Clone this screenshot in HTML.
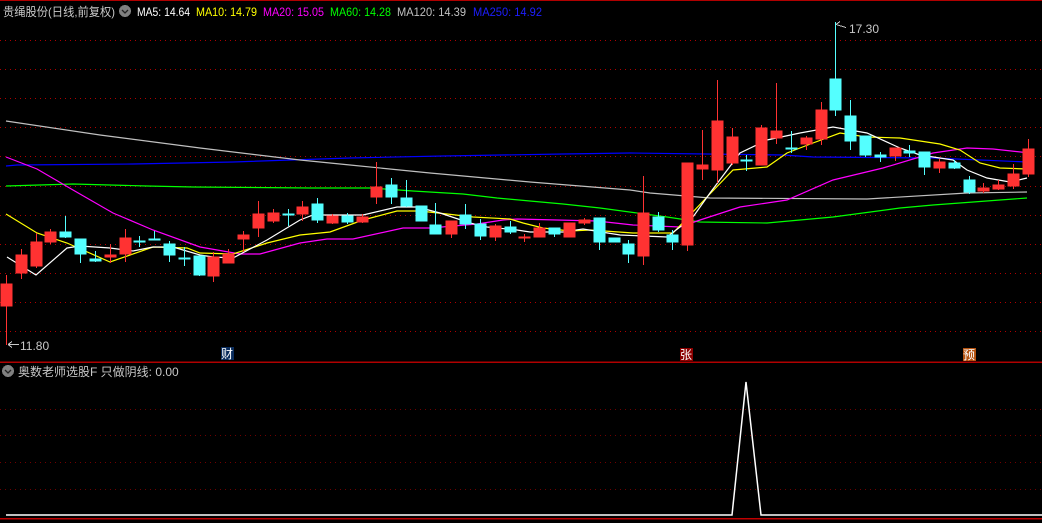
<!DOCTYPE html>
<html><head><meta charset="utf-8"><style>
html,body{margin:0;padding:0;background:#000;width:1042px;height:523px;overflow:hidden}
svg{display:block}
text{font-family:"Liberation Sans","Noto Sans CJK SC",sans-serif;font-size:12px}
</style></head><body>
<svg width="1042" height="523" viewBox="0 0 1042 523" xmlns="http://www.w3.org/2000/svg" shape-rendering="crispEdges">
<rect width="1042" height="523" fill="#000"/>
<line x1="0" y1="0.5" x2="1042" y2="0.5" stroke="#b00000"/>
<g stroke="#b00000" stroke-dasharray="1,4">
<line x1="0" y1="40.5" x2="1042" y2="40.5"/><line x1="0" y1="69.5" x2="1042" y2="69.5"/>
<line x1="0" y1="98.5" x2="1042" y2="98.5"/><line x1="0" y1="127.5" x2="1042" y2="127.5"/>
<line x1="0" y1="156.5" x2="1042" y2="156.5"/><line x1="0" y1="186.5" x2="1042" y2="186.5"/>
<line x1="0" y1="215.5" x2="1042" y2="215.5"/><line x1="0" y1="244.5" x2="1042" y2="244.5"/>
<line x1="0" y1="273.5" x2="1042" y2="273.5"/><line x1="0" y1="302.5" x2="1042" y2="302.5"/>
<line x1="0" y1="331.5" x2="1042" y2="331.5"/>
</g>
<g stroke="#700000" stroke-dasharray="1,4">
<line x1="0" y1="409.5" x2="1042" y2="409.5"/><line x1="0" y1="435.5" x2="1042" y2="435.5"/>
<line x1="0" y1="462.5" x2="1042" y2="462.5"/><line x1="0" y1="489.5" x2="1042" y2="489.5"/>
</g>
<g fill="none" stroke-width="1.2" shape-rendering="auto">
<polyline stroke="#0000ff" points="6,166 17,165 133,164 233,162 350,158 443,156 563,154 630,153 783,155 813,157 933,158 1027,162"/>
<polyline stroke="#c0c0c0" points="6,121 100,135 200,148 300,160 350,165 430,173 530,182 630,190 650,193 710,198 867,199 967,193 1027,192"/>
<polyline stroke="#00ff00" points="6,186 73,184 147,186 193,187 310,188 370,188 413,191 463,194 497,198 530,201 563,204 600,208 667,217 700,222 767,223 833,217 900,208 933,205 1000,200 1027,198"/>
<polyline stroke="#ff00ff" points="6,157 37,169 73,190 113,213 153,230 200,247 240,254 260,254 300,243 327,239 353,239 403,228 430,228 477,224 503,220 517,219 597,221 633,225 680,227 700,220 740,207 787,200 833,180 883,168 933,153 967,148 993,149 1030,153"/>
<polyline stroke="#ffff00" points="6,214 37,233 67,243 110,262 153,247 187,248 200,253 233,254 267,243 300,235 330,232 363,220 397,211 420,211 447,214 473,217 510,219 523,223 543,228 570,231 590,230 633,233 673,233 707,197 733,170 767,167 787,153 813,143 840,133 867,137 900,138 940,144 960,150 980,163 1000,168 1027,169"/>
<polyline stroke="#ffffff" points="7,257 36,275 67,248 80,246 110,248 133,251 153,247 173,247 200,255 213,257 233,258 267,240 300,220 313,215 340,215 363,215 397,207 417,207 440,213 470,223 487,227 517,230 530,232 563,232 583,229 620,235 667,237 693,217 710,193 740,153 767,140 800,133 833,127 867,133 900,148 920,155 953,160 967,170 987,178 1010,182 1027,178"/>
</g>
<g id="c">
<g stroke="#ff3232" fill="#ff3232">
<line x1="6.5" y1="275" x2="6.5" y2="345"/><rect x="1" y="284" width="11" height="22"/>
<line x1="21.5" y1="249" x2="21.5" y2="279"/><rect x="16" y="255" width="11" height="18"/>
<line x1="36.5" y1="233" x2="36.5" y2="268"/><rect x="31" y="242" width="11" height="24"/>
<line x1="50.5" y1="229" x2="50.5" y2="244"/><rect x="45" y="232" width="11" height="10"/>
<line x1="110.5" y1="244" x2="110.5" y2="263"/><rect x="105" y="255" width="11" height="2"/>
<line x1="125.5" y1="229" x2="125.5" y2="262"/><rect x="120" y="238" width="11" height="16"/>
<line x1="213.5" y1="252" x2="213.5" y2="282"/><rect x="208" y="257" width="11" height="19"/>
<line x1="228.5" y1="249" x2="228.5" y2="263"/><rect x="223" y="254" width="11" height="9"/>
<line x1="243.5" y1="231" x2="243.5" y2="252"/><rect x="238" y="235" width="11" height="4"/>
<line x1="258.5" y1="201" x2="258.5" y2="237"/><rect x="253" y="214" width="11" height="14"/>
<line x1="273.5" y1="209" x2="273.5" y2="223"/><rect x="268" y="213" width="11" height="8"/>
<line x1="302.5" y1="201" x2="302.5" y2="221"/><rect x="297" y="207" width="11" height="7"/>
<line x1="332.5" y1="214" x2="332.5" y2="224"/><rect x="327" y="216" width="11" height="7"/>
<line x1="362.5" y1="214" x2="362.5" y2="223"/><rect x="357" y="217" width="11" height="5"/>
<line x1="376.5" y1="162" x2="376.5" y2="204"/><rect x="371" y="187" width="11" height="10"/>
<line x1="451.5" y1="221" x2="451.5" y2="238"/><rect x="446" y="221" width="11" height="13"/>
<line x1="495.5" y1="224" x2="495.5" y2="241"/><rect x="490" y="226" width="11" height="11"/>
<line x1="524.5" y1="234" x2="524.5" y2="242"/><rect x="519" y="237" width="11" height="1"/>
<line x1="539.5" y1="223" x2="539.5" y2="237"/><rect x="534" y="228" width="11" height="9"/>
<line x1="569.5" y1="223" x2="569.5" y2="237"/><rect x="564" y="223" width="11" height="14"/>
<line x1="584.5" y1="218" x2="584.5" y2="225"/><rect x="579" y="220" width="11" height="3"/>
<line x1="643.5" y1="176" x2="643.5" y2="265"/><rect x="638" y="213" width="11" height="43"/>
<line x1="687.5" y1="163" x2="687.5" y2="251"/><rect x="682" y="163" width="11" height="82"/>
<line x1="702.5" y1="130" x2="702.5" y2="180"/><rect x="697" y="165" width="11" height="4"/>
<line x1="717.5" y1="80" x2="717.5" y2="183"/><rect x="712" y="121" width="11" height="49"/>
<line x1="732.5" y1="128" x2="732.5" y2="165"/><rect x="727" y="137" width="11" height="26"/>
<line x1="761.5" y1="125" x2="761.5" y2="165"/><rect x="756" y="128" width="11" height="37"/>
<line x1="776.5" y1="83" x2="776.5" y2="144"/><rect x="771" y="131" width="11" height="7"/>
<line x1="806.5" y1="136" x2="806.5" y2="150"/><rect x="801" y="138" width="11" height="6"/>
<line x1="821.5" y1="102" x2="821.5" y2="145"/><rect x="816" y="110" width="11" height="29"/>
<line x1="895.5" y1="148" x2="895.5" y2="161"/><rect x="890" y="148" width="11" height="8"/>
<line x1="939.5" y1="159" x2="939.5" y2="173"/><rect x="934" y="162" width="11" height="6"/>
<line x1="983.5" y1="183" x2="983.5" y2="193"/><rect x="978" y="188" width="11" height="3"/>
<line x1="998.5" y1="180" x2="998.5" y2="190"/><rect x="993" y="185" width="11" height="4"/>
<line x1="1013.5" y1="164" x2="1013.5" y2="189"/><rect x="1008" y="174" width="11" height="12"/>
<line x1="1028.5" y1="139" x2="1028.5" y2="177"/><rect x="1023" y="149" width="11" height="25"/>
</g>
<g stroke="#54ffff" fill="#54ffff">
<line x1="65.5" y1="216" x2="65.5" y2="238"/><rect x="60" y="232" width="11" height="5"/>
<line x1="80.5" y1="239" x2="80.5" y2="263"/><rect x="75" y="239" width="11" height="15"/>
<line x1="95.5" y1="251" x2="95.5" y2="262"/><rect x="90" y="259" width="11" height="2"/>
<line x1="139.5" y1="236" x2="139.5" y2="247"/><rect x="134" y="241" width="11" height="1"/>
<line x1="154.5" y1="231" x2="154.5" y2="240"/><rect x="149" y="239" width="11" height="1"/>
<line x1="169.5" y1="241" x2="169.5" y2="262"/><rect x="164" y="244" width="11" height="11"/>
<line x1="184.5" y1="247" x2="184.5" y2="266"/><rect x="179" y="258" width="11" height="1"/>
<line x1="199.5" y1="256" x2="199.5" y2="276"/><rect x="194" y="256" width="11" height="19"/>
<line x1="288.5" y1="209" x2="288.5" y2="226"/><rect x="283" y="214" width="11" height="1"/>
<line x1="317.5" y1="198" x2="317.5" y2="223"/><rect x="312" y="204" width="11" height="16"/>
<line x1="347.5" y1="213" x2="347.5" y2="224"/><rect x="342" y="216" width="11" height="6"/>
<line x1="391.5" y1="178" x2="391.5" y2="204"/><rect x="386" y="185" width="11" height="12"/>
<line x1="406.5" y1="180" x2="406.5" y2="207"/><rect x="401" y="198" width="11" height="8"/>
<line x1="421.5" y1="206" x2="421.5" y2="221"/><rect x="416" y="206" width="11" height="15"/>
<line x1="435.5" y1="203" x2="435.5" y2="234"/><rect x="430" y="225" width="11" height="9"/>
<line x1="465.5" y1="204" x2="465.5" y2="229"/><rect x="460" y="215" width="11" height="9"/>
<line x1="480.5" y1="219" x2="480.5" y2="240"/><rect x="475" y="224" width="11" height="12"/>
<line x1="510.5" y1="221" x2="510.5" y2="234"/><rect x="505" y="227" width="11" height="5"/>
<line x1="554.5" y1="228" x2="554.5" y2="237"/><rect x="549" y="228" width="11" height="6"/>
<line x1="599.5" y1="218" x2="599.5" y2="250"/><rect x="594" y="218" width="11" height="24"/>
<line x1="614.5" y1="238" x2="614.5" y2="242"/><rect x="609" y="238" width="11" height="4"/>
<line x1="628.5" y1="240" x2="628.5" y2="263"/><rect x="623" y="244" width="11" height="10"/>
<line x1="658.5" y1="212" x2="658.5" y2="232"/><rect x="653" y="217" width="11" height="13"/>
<line x1="672.5" y1="230" x2="672.5" y2="250"/><rect x="667" y="235" width="11" height="7"/>
<line x1="746.5" y1="155" x2="746.5" y2="171"/><rect x="741" y="160" width="11" height="1"/>
<line x1="791.5" y1="131" x2="791.5" y2="153"/><rect x="786" y="148" width="11" height="1"/>
<line x1="835.5" y1="22" x2="835.5" y2="116"/><rect x="830" y="79" width="11" height="31"/>
<line x1="850.5" y1="100" x2="850.5" y2="150"/><rect x="845" y="116" width="11" height="25"/>
<line x1="865.5" y1="136" x2="865.5" y2="157"/><rect x="860" y="136" width="11" height="19"/>
<line x1="880.5" y1="152" x2="880.5" y2="162"/><rect x="875" y="155" width="11" height="2"/>
<line x1="909.5" y1="145" x2="909.5" y2="157"/><rect x="904" y="151" width="11" height="2"/>
<line x1="924.5" y1="152" x2="924.5" y2="175"/><rect x="919" y="152" width="11" height="15"/>
<line x1="954.5" y1="160" x2="954.5" y2="169"/><rect x="949" y="163" width="11" height="5"/>
<line x1="969.5" y1="176" x2="969.5" y2="194"/><rect x="964" y="180" width="11" height="12"/>
</g>
</g>
<g stroke="#c8c8c8" fill="none" stroke-width="1">
<line x1="836" y1="24.5" x2="846" y2="27.5"/><line x1="836" y1="24.5" x2="840" y2="21.5"/>
<line x1="8" y1="344.5" x2="19" y2="344.5"/><line x1="8" y1="344.5" x2="12" y2="341.5"/><line x1="8" y1="344.5" x2="12" y2="347.5"/>
</g>
<text x="849" y="33" fill="#c8c8c8">17.30</text>
<text x="20" y="350" fill="#c8c8c8">11.80</text>
<rect x="221" y="347" width="13" height="13" fill="#0a2c5c"/>
<text x="221" y="358" fill="#fff">财</text>
<rect x="680" y="348" width="13" height="13" fill="#8b0000"/>
<text x="680" y="359" fill="#fff">张</text>
<rect x="963" y="348" width="13" height="13" fill="#b4520f"/>
<text x="963" y="359" fill="#fff">预</text>
<line x1="0" y1="362" x2="1042" y2="362" stroke="#b00000" stroke-width="1.5"/>
<text x="3" y="16" fill="#c8c8c8" textLength="112" lengthAdjust="spacingAndGlyphs">贵绳股份(日线,前复权)</text>
<circle cx="125" cy="11" r="6" fill="#808080"/>
<polyline points="122,10 125,13 128,10" fill="none" stroke="#222" stroke-width="1.3" shape-rendering="auto"/>
<text x="137" y="16" fill="#ffffff" textLength="53" lengthAdjust="spacingAndGlyphs">MA5: 14.64</text>
<text x="196" y="16" fill="#ffff00" textLength="61" lengthAdjust="spacingAndGlyphs">MA10: 14.79</text>
<text x="263" y="16" fill="#ff00ff" textLength="61" lengthAdjust="spacingAndGlyphs">MA20: 15.05</text>
<text x="330" y="16" fill="#00ff00" textLength="61" lengthAdjust="spacingAndGlyphs">MA60: 14.28</text>
<text x="397" y="16" fill="#c0c0c0" textLength="69" lengthAdjust="spacingAndGlyphs">MA120: 14.39</text>
<text x="473" y="16" fill="#1e1eff" textLength="69" lengthAdjust="spacingAndGlyphs">MA250: 14.92</text>
<circle cx="8" cy="371" r="6" fill="#808080"/>
<polyline points="5,370 8,373 11,370" fill="none" stroke="#222" stroke-width="1.3" shape-rendering="auto"/>
<text x="18" y="376" fill="#c8c8c8">奥数老师选股F 只做阴线: 0.00</text>
<polyline points="6,515 732,515 746,382 761,515 1042,515" fill="none" stroke="#ffffff" stroke-width="1.5" shape-rendering="auto"/>
<line x1="0" y1="518.5" x2="1042" y2="518.5" stroke="#c00000" stroke-width="1.5"/>
</svg>
</body></html>
